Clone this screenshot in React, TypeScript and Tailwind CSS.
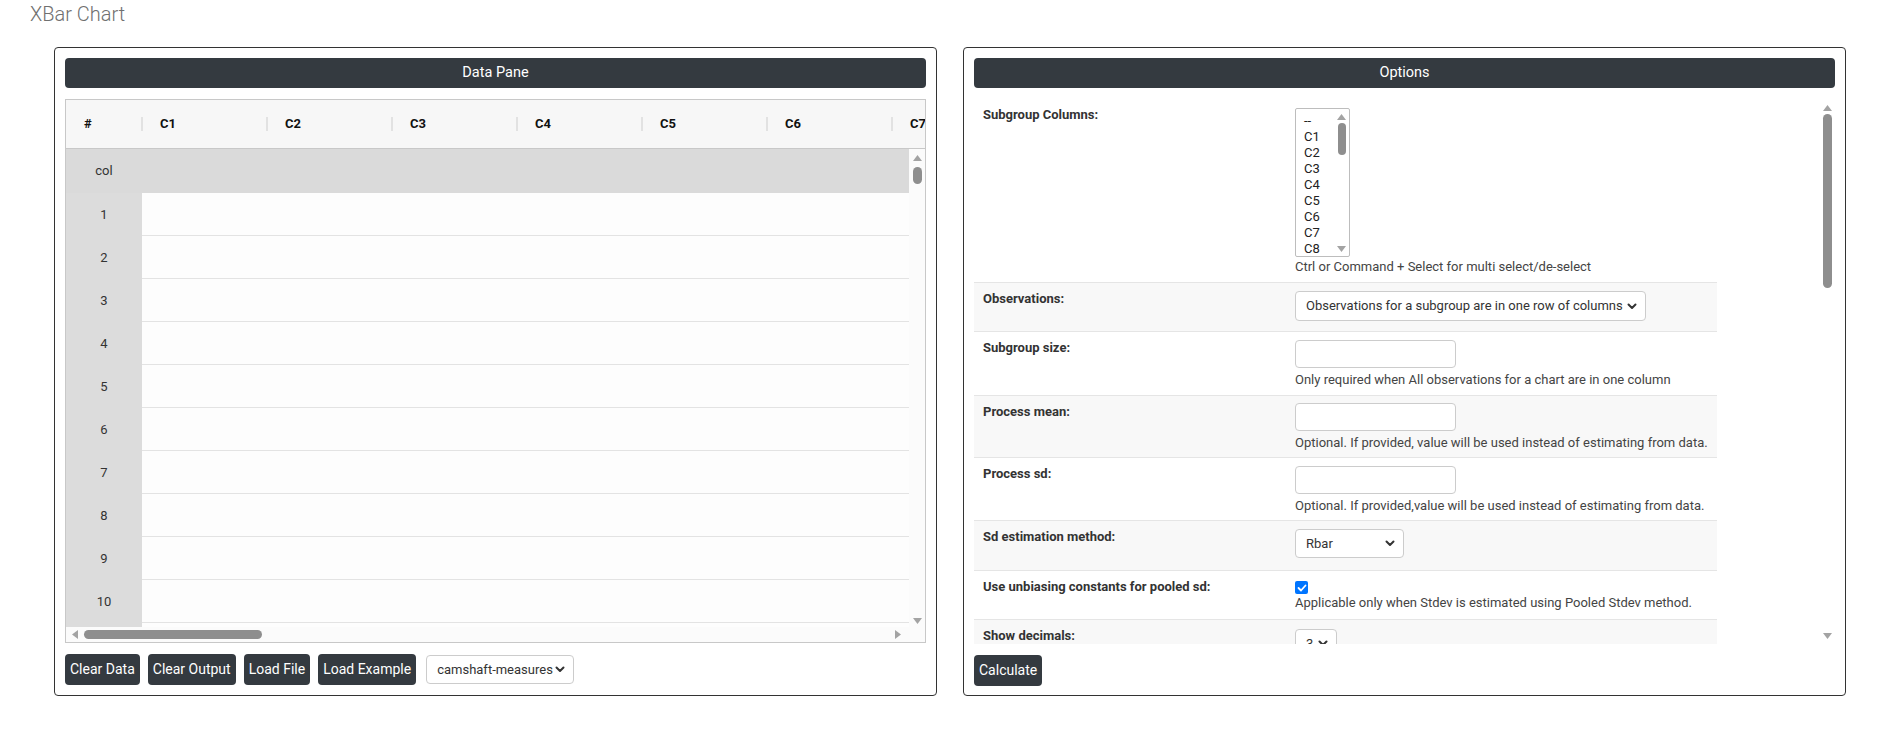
import React from "react";

const F = "font-['Roboto','Noto_Sans',sans-serif]";

function TriUp({ className = "" }: { className?: string }) {
  return (
    <svg width="9" height="6" viewBox="0 0 9 6" className={className}>
      <polygon points="4.5,0 9,6 0,6" fill="#a3a3a3" />
    </svg>
  );
}
function TriDown({ className = "" }: { className?: string }) {
  return (
    <svg width="9" height="6" viewBox="0 0 9 6" className={className}>
      <polygon points="0,0 9,0 4.5,6" fill="#a3a3a3" />
    </svg>
  );
}
function TriLeft({ className = "" }: { className?: string }) {
  return (
    <svg width="6" height="9" viewBox="0 0 6 9" className={className}>
      <polygon points="6,0 6,9 0,4.5" fill="#a3a3a3" />
    </svg>
  );
}
function TriRight({ className = "" }: { className?: string }) {
  return (
    <svg width="6" height="9" viewBox="0 0 6 9" className={className}>
      <polygon points="0,0 6,4.5 0,9" fill="#a3a3a3" />
    </svg>
  );
}

function Chevron() {
  return (
    <svg width="10" height="7" viewBox="0 0 10 7" className="shrink-0">
      <polyline points="1.5,1.5 5,5 8.5,1.5" fill="none" stroke="#333" strokeWidth="2" strokeLinecap="round" strokeLinejoin="round" />
    </svg>
  );
}

function FakeSelect({ text, className = "" }: { text: string; className?: string }) {
  return (
    <div
      className={`flex items-center justify-between border border-[#ccc] rounded-[4px] bg-white pl-[10px] pr-[8px] text-[13px] text-[#333] ${className}`}
    >
      <span className="whitespace-nowrap">{text}</span>
      <Chevron />
    </div>
  );
}

function DarkButton({ children }: { children: React.ReactNode }) {
  return (
    <div className="h-[31px] flex items-center px-[5px] bg-[#343a40] text-white rounded-[4px] text-[14px] whitespace-nowrap">
      {children}
    </div>
  );
}

function PanelHeader({ title }: { title: string }) {
  return (
    <div className="h-[30px] shrink-0 bg-[#343a40] rounded-[4px] text-white text-[14.5px] flex items-center justify-center">
      {title}
    </div>
  );
}

function DataPane() {
  const cols = ["C1", "C2", "C3", "C4", "C5", "C6", "C7"];
  const rows = Array.from({ length: 11 }, (_, i) => i + 1);
  return (
    <div className="w-[883px] h-[649px] border border-[#333] rounded-[4px] p-[10px] flex flex-col">
      <PanelHeader title="Data Pane" />
      <div className="mt-[11px] h-[545px] border border-[#c8c8c8] flex flex-col overflow-hidden">
        {/* header row */}
        <div className="h-[49px] shrink-0 bg-[#f7f7f7] border-b border-[#c8c8c8] flex items-center overflow-hidden text-[13px] font-bold text-[#111]">
          <div className="w-[75px] shrink-0 pl-[18px]">#</div>
          {cols.map((c) => (
            <div key={c} className="w-[125px] shrink-0 flex items-center">
              <div className="w-[2px] h-[14px] bg-[#e2e2e2]" />
              <div className="pl-[17px]">{c}</div>
            </div>
          ))}
        </div>
        <div className="flex-1 flex min-h-0">
          <div className="flex-1 flex flex-col min-w-0">
            <div className="flex-1 overflow-hidden text-[13px] text-[#333]">
              <div className="h-[44px] bg-[#dadada] flex">
                <div className="w-[76px] flex items-center justify-center">col</div>
              </div>
              {rows.map((r) => (
                <div key={r} className="h-[43px] flex">
                  <div className="w-[76px] shrink-0 bg-[#dcdcdc] flex items-center justify-center">{r <= 10 ? r : ""}</div>
                  <div className="flex-1 bg-[#fdfdfd] border-b border-[#e3e3e3]" />
                </div>
              ))}
            </div>
            <div className="h-[15px] shrink-0 bg-[#fbfbfb] flex items-center pl-[6px] pr-[3px]">
              <TriLeft />
              <div className="ml-[6px] w-[178px] h-[9px] rounded-full bg-[#8e8e8e]" />
              <div className="flex-1" />
              <TriRight className="mr-[5px]" />
            </div>
          </div>
          <div className="w-[16px] shrink-0 flex flex-col bg-[#fbfbfb]">
            <div className="flex-1 flex flex-col items-center pt-[6px]">
              <TriUp />
              <div className="mt-[6px] w-[9px] h-[17px] rounded-full bg-[#8e8e8e]" />
              <div className="flex-1" />
              <TriDown className="mb-[3px]" />
            </div>
            <div className="h-[15px] bg-[#fbfbfb]" />
          </div>
        </div>
      </div>
      <div className="mt-[11px] flex items-center gap-[8px]">
        <DarkButton>Clear Data</DarkButton>
        <DarkButton>Clear Output</DarkButton>
        <DarkButton>Load File</DarkButton>
        <DarkButton>Load Example</DarkButton>
        <FakeSelect text="camshaft-measures" className="ml-[2px] w-[148px] h-[29px]" />
      </div>
    </div>
  );
}

function Label({ children }: { children: React.ReactNode }) {
  return <div className="w-[313px] shrink-0 pl-[9px] pt-[7px] text-[13px] font-bold text-[#333] leading-[18px]">{children}</div>;
}

function Help({ children }: { children: React.ReactNode }) {
  return <div className="text-[13px] text-[#444] leading-[18px] whitespace-nowrap">{children}</div>;
}

function TextInput() {
  return <div className="w-[161px] h-[28px] border border-[#ccc] rounded-[4px] bg-white" />;
}

function OptionsPane() {
  const listItems = ["--", "C1", "C2", "C3", "C4", "C5", "C6", "C7", "C8"];
  return (
    <div className="w-[883px] h-[649px] border border-[#333] rounded-[4px] p-[10px] flex flex-col">
      <PanelHeader title="Options" />
      <div className="mt-[11px] h-[545px] flex">
        <div className="flex-1 overflow-hidden">
          <div className="w-[743px]">
            {/* Subgroup Columns */}
            <div className="h-[184px] flex bg-white border-b border-[#e5e5e5]">
              <Label>Subgroup Columns:</Label>
              <div className="pt-[9px] pl-[8px]">
                <div className="w-[55px] h-[149px] border border-[#bdbdbd] rounded-[2px] bg-white flex overflow-hidden">
                  <div className="flex-1 pl-[8px] pt-[4px] text-[13px] text-[#222] leading-[16px]">
                    {listItems.map((t) => (
                      <div key={t}>{t}</div>
                    ))}
                  </div>
                  <div className="w-[13px] flex flex-col items-center pt-[5px] pb-[4px] pr-[2px]">
                    <TriUp />
                    <div className="mt-[3px] w-[8px] h-[32px] rounded-full bg-[#8e8e8e]" />
                    <div className="flex-1" />
                    <TriDown />
                  </div>
                </div>
                <div className="mt-[1px]">
                  <Help>Ctrl or Command + Select for multi select/de-select</Help>
                </div>
              </div>
            </div>
            {/* Observations */}
            <div className="h-[49px] flex bg-[#f8f8f8] border-b border-[#e5e5e5]">
              <Label>Observations:</Label>
              <div className="pt-[8px] pl-[8px]">
                <FakeSelect text="Observations for a subgroup are in one row of columns" className="w-[351px] h-[30px]" />
              </div>
            </div>
            {/* Subgroup size */}
            <div className="h-[64px] flex bg-white border-b border-[#e5e5e5]">
              <Label>Subgroup size:</Label>
              <div className="pt-[8px] pl-[8px]">
                <TextInput />
                <div className="mt-[3px]">
                  <Help>Only required when All observations for a chart are in one column</Help>
                </div>
              </div>
            </div>
            {/* Process mean */}
            <div className="h-[62px] flex bg-[#f8f8f8] border-b border-[#e5e5e5]">
              <Label>Process mean:</Label>
              <div className="pt-[7px] pl-[8px]">
                <TextInput />
                <div className="mt-[3px]">
                  <Help>Optional. If provided, value will be used instead of estimating from data.</Help>
                </div>
              </div>
            </div>
            {/* Process sd */}
            <div className="h-[63px] flex bg-white border-b border-[#e5e5e5]">
              <Label>Process sd:</Label>
              <div className="pt-[8px] pl-[8px]">
                <TextInput />
                <div className="mt-[3px]">
                  <Help>Optional. If provided,value will be used instead of estimating from data.</Help>
                </div>
              </div>
            </div>
            {/* Sd estimation method */}
            <div className="h-[50px] flex bg-[#f8f8f8] border-b border-[#e5e5e5]">
              <Label>Sd estimation method:</Label>
              <div className="pt-[8px] pl-[8px]">
                <FakeSelect text="Rbar" className="w-[109px] h-[29px]" />
              </div>
            </div>
            {/* Use unbiasing constants */}
            <div className="h-[49px] flex bg-white border-b border-[#e5e5e5]">
              <Label>Use unbiasing constants for pooled sd:</Label>
              <div className="pt-[10px] pl-[8px]">
                <div className="w-[13px] h-[13px] rounded-[2px] bg-[#0075ff] flex items-center justify-center">
                  <svg width="10" height="8" viewBox="0 0 10 8">
                    <polyline points="1.5,4 4,6.5 8.5,1.5" fill="none" stroke="white" strokeWidth="1.8" strokeLinecap="round" strokeLinejoin="round" />
                  </svg>
                </div>
                <div className="mt-[0px]">
                  <Help>Applicable only when Stdev is estimated using Pooled Stdev method.</Help>
                </div>
              </div>
            </div>
            {/* Show decimals */}
            <div className="h-[50px] flex bg-[#f8f8f8]">
              <Label>Show decimals:</Label>
              <div className="pt-[9px] pl-[8px]">
                <FakeSelect text="3" className="w-[42px] h-[29px] pl-[8px] pr-[4px]" />
              </div>
            </div>
          </div>
        </div>
        <div className="w-[15px] shrink-0 flex flex-col items-center pt-[6px] pb-[5px]">
          <TriUp />
          <div className="mt-[3px] w-[9px] h-[174px] rounded-full bg-[#8e8e8e]" />
          <div className="flex-1" />
          <TriDown />
        </div>
      </div>
      <div className="mt-[11px] flex items-center">
        <DarkButton>Calculate</DarkButton>
      </div>
    </div>
  );
}

export default function App() {
  return (
    <div className={`w-[1877px] h-[736px] bg-white overflow-hidden ${F}`}>
      <div className="h-[47px] pl-[30px] pt-[2px] text-[20px] leading-[24px] font-light text-[#707070]">XBar Chart</div>
      <div className="flex gap-[26px] pl-[54px]">
        <DataPane />
        <OptionsPane />
      </div>
    </div>
  );
}
